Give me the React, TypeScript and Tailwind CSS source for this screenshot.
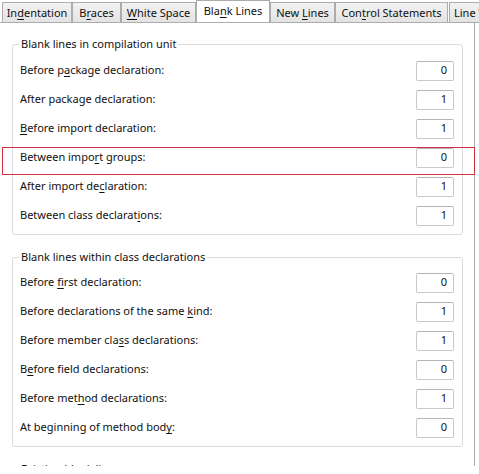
import React from "react";

const U = ({ children }: { children: React.ReactNode }) => (
  <span className="underline underline-offset-2 decoration-1">{children}</span>
);

type Row = { label: React.ReactNode; value: string };

const group1: Row[] = [
  { label: <>Before p<U>a</U>ckage declaration:</>, value: "0" },
  { label: <>After package declaration:</>, value: "1" },
  { label: <><U>B</U>efore import declaration:</>, value: "1" },
  { label: <>Between impo<U>r</U>t groups:</>, value: "0" },
  { label: <>After import de<U>c</U>laration:</>, value: "1" },
  { label: <>Between class declarat<U>i</U>ons:</>, value: "1" },
];

const group2: Row[] = [
  { label: <>Before <U>f</U>irst declaration:</>, value: "0" },
  { label: <>Before declarations of the same <U>k</U>ind:</>, value: "1" },
  { label: <>Before member cla<U>s</U>s declarations:</>, value: "1" },
  { label: <>B<U>e</U>fore field declarations:</>, value: "0" },
  { label: <>Before met<U>h</U>od declarations:</>, value: "1" },
  { label: <>At beginning of method bod<U>y</U>:</>, value: "0" },
];

function Tab({ w, children, active }: { w: string; children: React.ReactNode; active?: boolean }) {
  if (active) {
    return (
      <div
        className={`${w} shrink-0 h-[23px] -mb-px bg-white border border-b-0 border-[#acacac] flex items-center justify-center relative z-10 pb-[1px]`}
      >
        <span>{children}</span>
      </div>
    );
  }
  return (
    <div
      className={`${w} shrink-0 h-[20px] border border-b-0 border-[#acacac] bg-gradient-to-b from-[#f2f2f2] to-[#e3e3e3] flex items-center justify-center pt-[1px]`}
    >
      <span>{children}</span>
    </div>
  );
}

function Group({
  title,
  rows,
  pt,
}: {
  title: string;
  rows: Row[];
  pt: string;
}) {
  return (
    <div className={`relative ml-[12px] w-[451px] border border-[#dcdcdc] rounded-[3px] ${pt} pb-[4px] pl-[7px] pr-[8px]`}>
      <div className="absolute left-[6px] top-[-9px] bg-white px-[2px] leading-[16px] text-[#111]">
        {title}
      </div>
      {rows.map((r, i) => (
        <div key={i} className="h-[29px] flex items-center justify-between">
          <div className="text-[#111]">{r.label}</div>
          <div className="w-[38px] h-[20px] border border-[#c9c9c9] border-t-[#b5b5b5] rounded-[2px] bg-white flex items-center justify-end pr-[6px] text-[#111]">
            {r.value}
          </div>
        </div>
      ))}
    </div>
  );
}

export default function App() {
  return (
    <div
      className="w-[479px] h-[474px] bg-white overflow-hidden relative text-[11px]"
      style={{ fontFamily: '"Segoe UI", "Noto Sans", Arial, sans-serif' }}
    >
      {/* tabs */}
      <div className="h-[23px] flex items-end border-b border-[#acacac] pl-[2px] whitespace-nowrap text-[#111] overflow-hidden">
        <Tab w="w-[70px]">In<U>d</U>entation</Tab>
        <Tab w="w-[49px]">B<U>r</U>aces</Tab>
        <Tab w="w-[75px]"><U>W</U>hite Space</Tab>
        <Tab w="w-[74px]" active>Bla<U>n</U>k Lines</Tab>
        <Tab w="w-[65px]">New <U>L</U>ines</Tab>
        <Tab w="w-[113px]">Con<U>t</U>rol Statements</Tab>
        <div className="shrink-0 ml-[1px] w-[90px] h-[20px] border border-b-0 border-[#acacac] bg-gradient-to-b from-[#f2f2f2] to-[#e3e3e3] flex items-center pl-[4px] pt-[1px]">
          <span>Line Wrapping</span>
        </div>
      </div>
      {/* panel */}
      <div className="w-[475px] h-[443px] border-r border-[#acacac] overflow-hidden">
        <div className="pt-[21px]">
          <Group title="Blank lines in compilation unit" rows={group1} pt="pt-[11px]" />
          <div className="h-[22px]" />
          <Group title="Blank lines within class declarations" rows={group2} pt="pt-[10px]" />
          <div className="h-[22px]" />
          <div className="relative ml-[12px] w-[451px] h-[40px] border border-[#dcdcdc] rounded-[3px]">
            <div className="absolute left-[6px] top-[-9px] bg-white px-[2px] leading-[16px] text-[#111]">
              Existing blank lines
            </div>
          </div>
        </div>
      </div>
      {/* highlight annotation */}
      <div className="absolute left-[2px] top-[147px] w-[473px] h-[28px] border border-[#d0313f] pointer-events-none" />
    </div>
  );
}
